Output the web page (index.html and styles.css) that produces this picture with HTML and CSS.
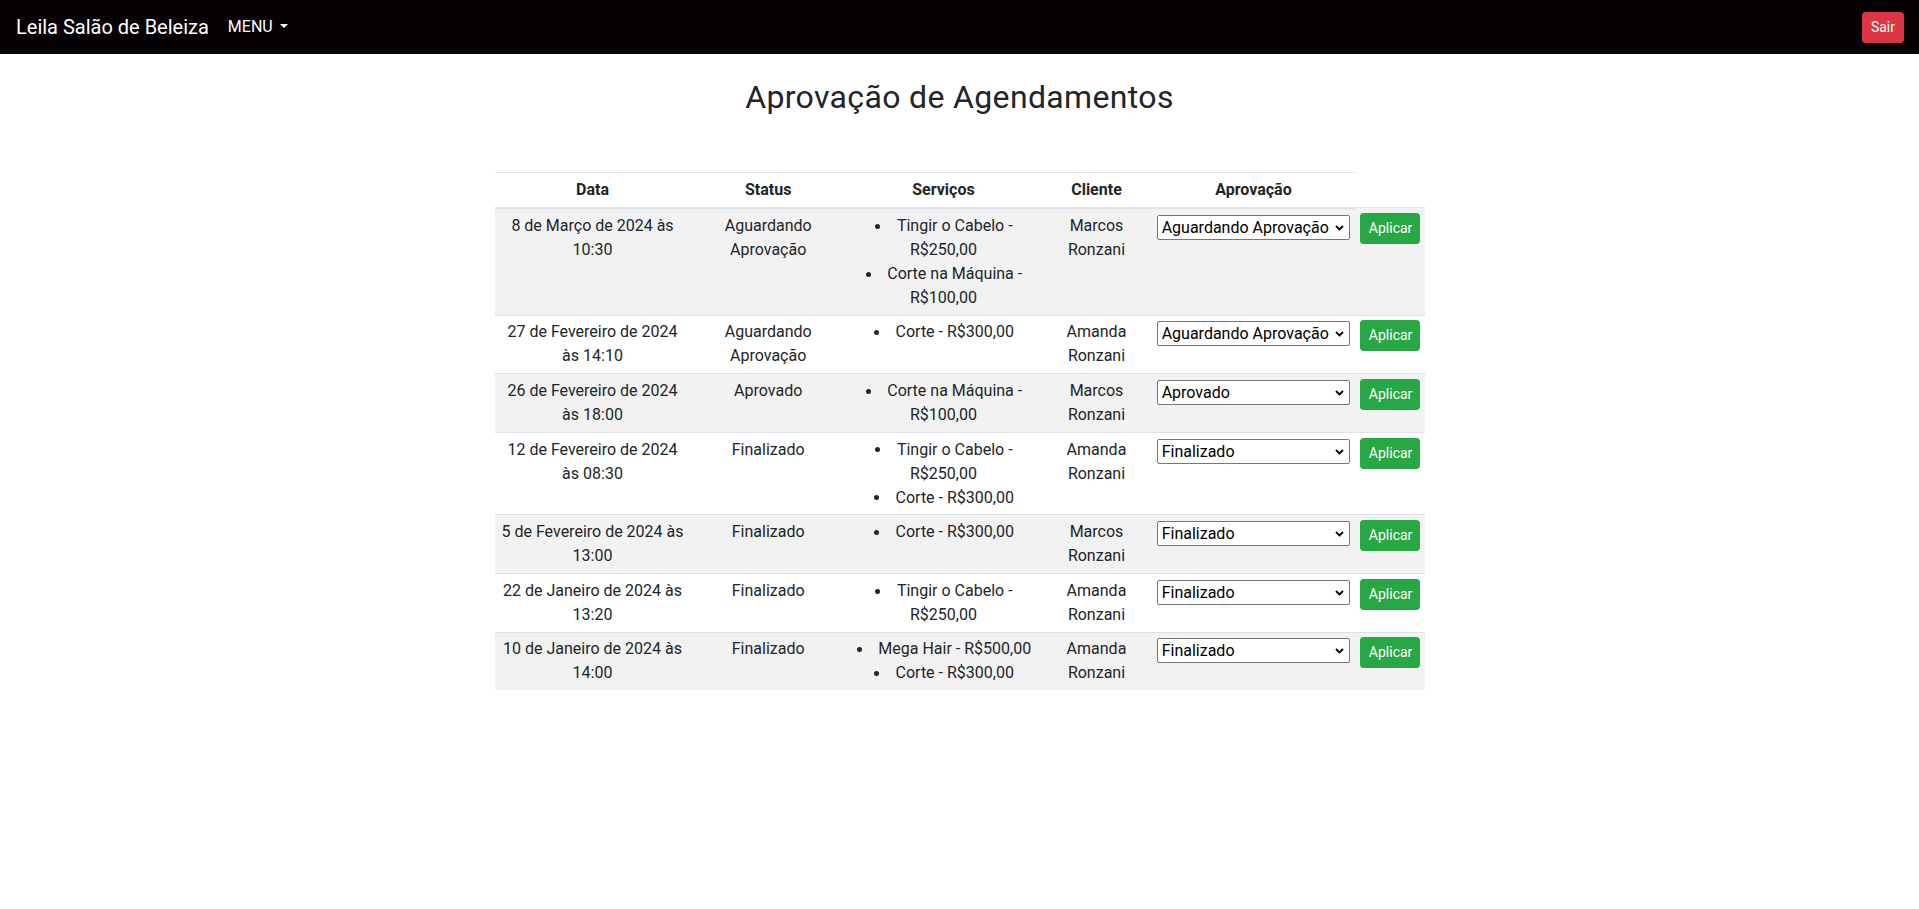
FILE: index.html
```html
<!DOCTYPE html>
<html lang="pt-BR">
<head>
<meta charset="utf-8">
<title>Aprovação de Agendamentos</title>
<link rel="stylesheet" href="styles.css">
</head>
<body>
<nav class="navbar">
  <div class="nav-left">
    <a class="brand" href="#">Leila Salão de Beleiza</a>
    <a class="nav-link dropdown-toggle" href="#">MENU</a>
  </div>
  <button class="btn btn-danger">Sair</button>
</nav>
<main class="main">
  <h2 class="title">Aprovação de Agendamentos</h2>
  <table class="table">
    <colgroup>
      <col class="c-data"><col class="c-status"><col class="c-serv"><col class="c-cli"><col class="c-apr"><col class="c-btn">
    </colgroup>
    <thead>
      <tr><th>Data</th><th>Status</th><th>Serviços</th><th>Cliente</th><th>Aprovação</th></tr>
    </thead>
    <tbody>
      <tr>
        <td>8 de Março de 2024 às 10:30</td>
        <td>Aguardando Aprovação</td>
        <td><ul class="svc"><li>Tingir o Cabelo - R$250,00</li><li>Corte na Máquina - R$100,00</li></ul></td>
        <td>Marcos Ronzani</td>
        <td><div class="sel"><select><option selected>Aguardando Aprovação</option><option>Aprovado</option><option>Finalizado</option></select><svg class="chev" width="9" height="6" viewBox="0 0 9 6"><path d="M1 1l3.5 3.5L8 1" fill="none" stroke="#000" stroke-width="1.8"/></svg></div></td>
        <td><button class="btn btn-success">Aplicar</button></td>
      </tr>
      <tr>
        <td>27 de Fevereiro de 2024 às 14:10</td>
        <td>Aguardando Aprovação</td>
        <td><ul class="svc"><li>Corte - R$300,00</li></ul></td>
        <td>Amanda Ronzani</td>
        <td><div class="sel"><select><option selected>Aguardando Aprovação</option><option>Aprovado</option><option>Finalizado</option></select><svg class="chev" width="9" height="6" viewBox="0 0 9 6"><path d="M1 1l3.5 3.5L8 1" fill="none" stroke="#000" stroke-width="1.8"/></svg></div></td>
        <td><button class="btn btn-success">Aplicar</button></td>
      </tr>
      <tr>
        <td>26 de Fevereiro de 2024 às 18:00</td>
        <td>Aprovado</td>
        <td><ul class="svc"><li>Corte na Máquina - R$100,00</li></ul></td>
        <td>Marcos Ronzani</td>
        <td><div class="sel"><select><option>Aguardando Aprovação</option><option selected>Aprovado</option><option>Finalizado</option></select><svg class="chev" width="9" height="6" viewBox="0 0 9 6"><path d="M1 1l3.5 3.5L8 1" fill="none" stroke="#000" stroke-width="1.8"/></svg></div></td>
        <td><button class="btn btn-success">Aplicar</button></td>
      </tr>
      <tr>
        <td>12 de Fevereiro de 2024 às 08:30</td>
        <td>Finalizado</td>
        <td><ul class="svc"><li>Tingir o Cabelo - R$250,00</li><li>Corte - R$300,00</li></ul></td>
        <td>Amanda Ronzani</td>
        <td><div class="sel"><select><option>Aguardando Aprovação</option><option>Aprovado</option><option selected>Finalizado</option></select><svg class="chev" width="9" height="6" viewBox="0 0 9 6"><path d="M1 1l3.5 3.5L8 1" fill="none" stroke="#000" stroke-width="1.8"/></svg></div></td>
        <td><button class="btn btn-success">Aplicar</button></td>
      </tr>
      <tr>
        <td>5 de Fevereiro de 2024 às 13:00</td>
        <td>Finalizado</td>
        <td><ul class="svc"><li>Corte - R$300,00</li></ul></td>
        <td>Marcos Ronzani</td>
        <td><div class="sel"><select><option>Aguardando Aprovação</option><option>Aprovado</option><option selected>Finalizado</option></select><svg class="chev" width="9" height="6" viewBox="0 0 9 6"><path d="M1 1l3.5 3.5L8 1" fill="none" stroke="#000" stroke-width="1.8"/></svg></div></td>
        <td><button class="btn btn-success">Aplicar</button></td>
      </tr>
      <tr>
        <td>22 de Janeiro de 2024 às 13:20</td>
        <td>Finalizado</td>
        <td><ul class="svc"><li>Tingir o Cabelo - R$250,00</li></ul></td>
        <td>Amanda Ronzani</td>
        <td><div class="sel"><select><option>Aguardando Aprovação</option><option>Aprovado</option><option selected>Finalizado</option></select><svg class="chev" width="9" height="6" viewBox="0 0 9 6"><path d="M1 1l3.5 3.5L8 1" fill="none" stroke="#000" stroke-width="1.8"/></svg></div></td>
        <td><button class="btn btn-success">Aplicar</button></td>
      </tr>
      <tr>
        <td>10 de Janeiro de 2024 às 14:00</td>
        <td>Finalizado</td>
        <td><ul class="svc"><li>Mega Hair - R$500,00</li><li>Corte - R$300,00</li></ul></td>
        <td>Amanda Ronzani</td>
        <td><div class="sel"><select><option>Aguardando Aprovação</option><option>Aprovado</option><option selected>Finalizado</option></select><svg class="chev" width="9" height="6" viewBox="0 0 9 6"><path d="M1 1l3.5 3.5L8 1" fill="none" stroke="#000" stroke-width="1.8"/></svg></div></td>
        <td><button class="btn btn-success">Aplicar</button></td>
      </tr>
    </tbody>
  </table>
</main>
</body>
</html>
```

FILE: styles.css
```css
* { box-sizing: border-box; }
html, body { margin: 0; padding: 0; }
body {
  font-family: Roboto, "Noto Sans", sans-serif;
  font-size: 16px;
  line-height: 1.5;
  color: #212529;
  background: #fff;
}
a { text-decoration: none; }
.navbar {
  height: 54px;
  padding: 0 15px 0 16px;
  background: #060104;
  display: flex;
  align-items: center;
  justify-content: space-between;
}
.nav-left { display: flex; align-items: center; }
.brand {
  color: #fff;
  font-size: 20px;
  line-height: 30px;
  margin-right: 11px;
}
.nav-link {
  color: #fff;
  font-size: 16px;
  padding: 0 8px;
}
.dropdown-toggle::after {
  content: "";
  display: inline-block;
  margin-left: 0.45em;
  vertical-align: 0.255em;
  border-top: 0.28em solid;
  border-right: 0.28em solid transparent;
  border-left: 0.28em solid transparent;
  border-bottom: 0;
}
.btn {
  font-family: inherit;
  font-size: 14px;
  line-height: 21px;
  padding: 4px 8px;
  border: 1px solid transparent;
  border-radius: 3.2px;
  color: #fff;
  cursor: pointer;
}
.btn-danger { background: #dc3545; border-color: #dc3545; }
.btn-success { background: #28a745; border-color: #28a745; width: 100%; }
.main { padding-top: 24px; }
.title {
  margin: 0 0 48px;
  text-align: center;
  font-size: 32px;
  font-weight: 400;
  letter-spacing: 0.35px;
  line-height: 1.2;
  padding-bottom: 8px;
}
.table {
  width: 930px;
  margin: 0 auto;
  table-layout: fixed;
  border-collapse: collapse;
}
.c-data { width: 196px; }
.c-status { width: 155.4px; }
.c-serv { width: 195.2px; }
.c-cli { width: 110.8px; }
.c-apr { width: 203.2px; }
.c-btn { width: 69.4px; }
.table th {
  padding: 4.8px;
  font-weight: 700;
  text-align: center;
  border-top: 1px solid #dee2e6;
  border-bottom: 2px solid #dee2e6;
  vertical-align: bottom;
}
.table td {
  padding: 4.8px;
  text-align: center;
  vertical-align: top;
  border-top: 1px solid #dee2e6;
}
.table tbody tr:nth-child(odd) td { background: #f2f2f2; }
.svc { margin: 0; padding: 0; list-style: none; }
.svc li::before {
  content: "";
  display: inline-block;
  width: 5px;
  height: 5px;
  border-radius: 50%;
  background: currentColor;
  margin-left: 1px;
  margin-right: 16.5px;
  vertical-align: 0.13em;
}
.sel { position: relative; }
.sel select {
  appearance: none;
  -webkit-appearance: none;
  display: block;
  width: 100%;
  height: 25px;
  margin-top: 1px;
  padding: 0 16px 0 4px;
  font-family: inherit;
  font-size: 16px;
  color: #000;
  background: #fff;
  border: 1px solid #767676;
  border-radius: 2px;
}
.chev { position: absolute; right: 6px; top: 10px; }
```
